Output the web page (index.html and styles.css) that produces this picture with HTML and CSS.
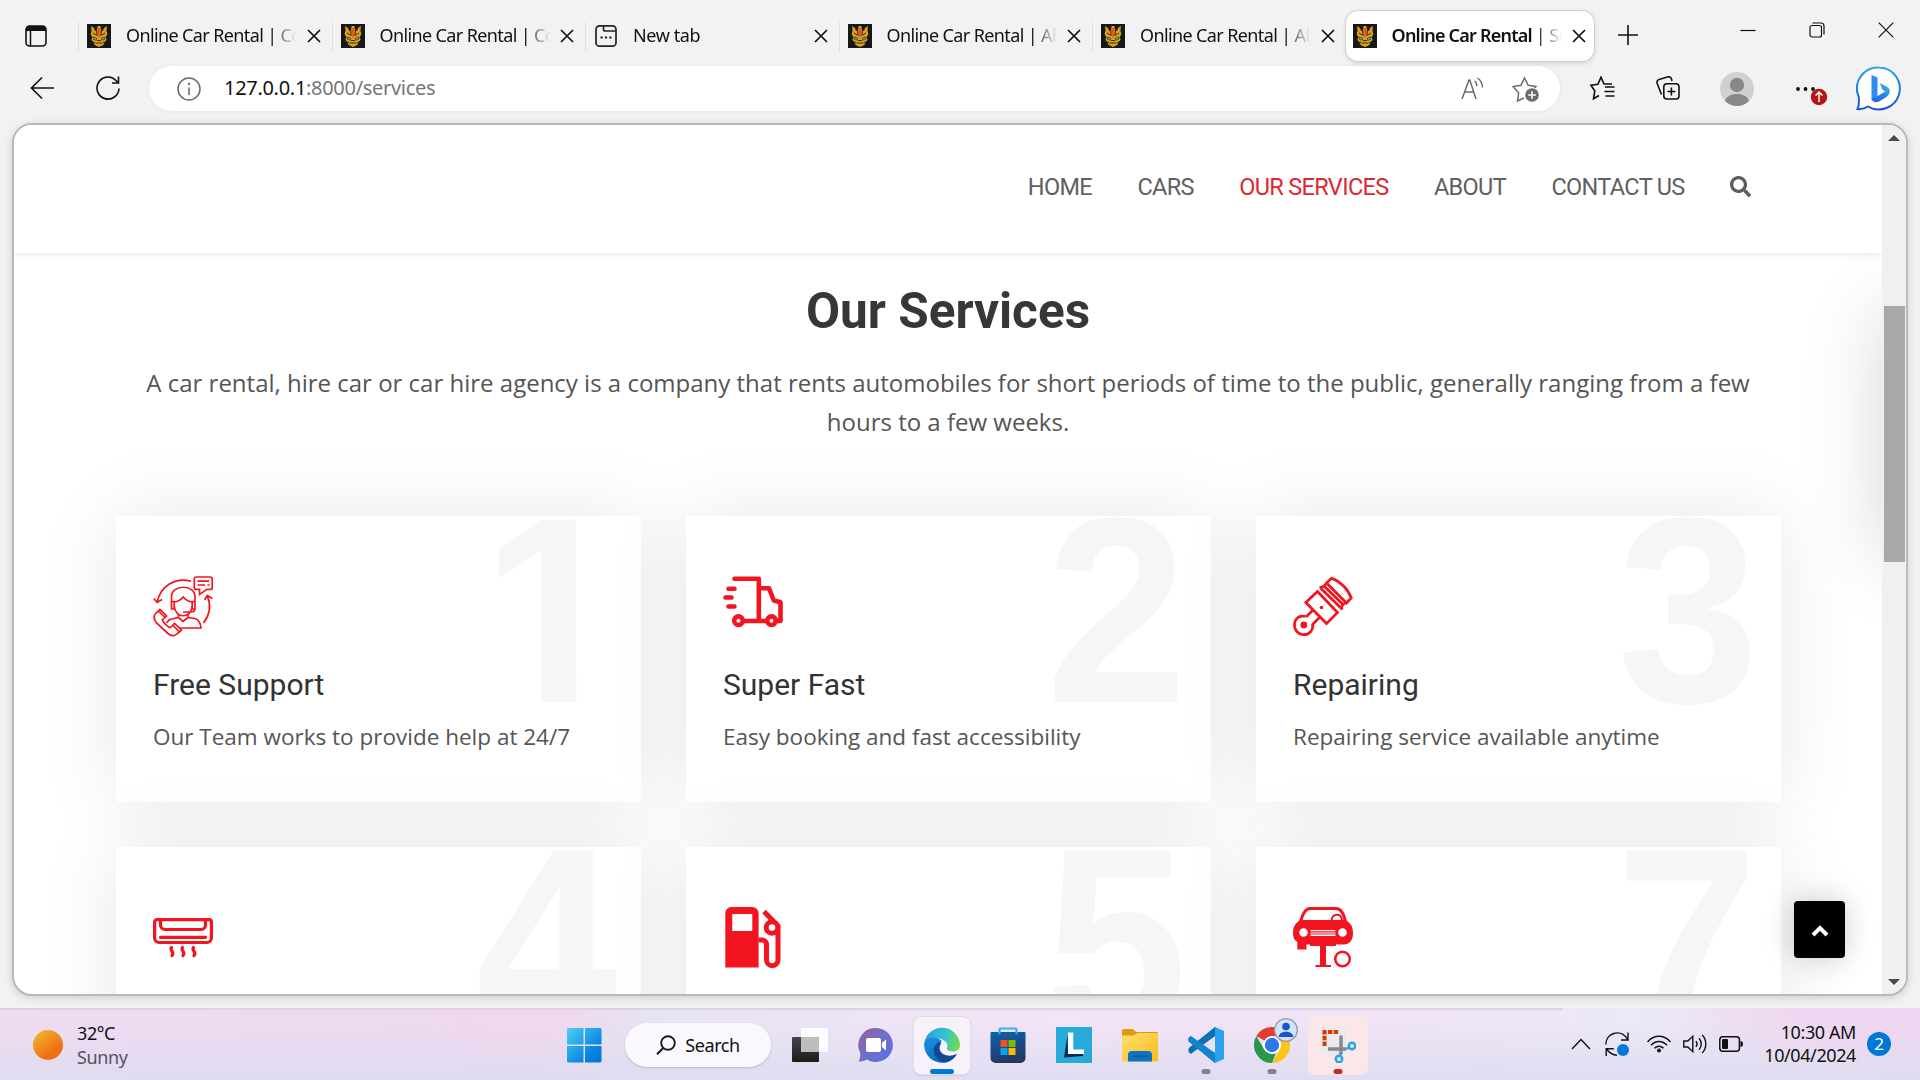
FILE: index.html
```html
<!DOCTYPE html>
<html lang="en">
<head>
<meta charset="utf-8">
<title>Online Car Rental | Services</title>
<link rel="stylesheet" href="styles.css">
</head>
<body>
<svg class="defs" width="0" height="0">
  <defs>
    <symbol id="favicon" viewBox="0 0 24 24">
      <rect width="24" height="24" fill="#17181a"/>
      <path d="M4 2l3 2 1 3 2-1 .6-4h2.8l.6 4 2 1 1-3 3-2-.6 5 1 3-1.600 3 .8 3-2 2-1.200 3-4.400 2-4.400-2-1.200-3-2-2 .8-3L3.600 10l1-3z" fill="#dfa012"/>
      <path d="M10.800 4h2.400l.5 7L12 14l-1.700-3z" fill="#e4572a"/>
      <path d="M9.500 5l.5 7M14.500 5l-.5 7M6 9l3 2M18 9l-3 2M9 19h6M10 16.500h4M6.500 18l2 1M17.500 18l-2 1" stroke="#3a2a0b" stroke-width="1" fill="none"/>
      <path d="M5.800 13l4 1.200-.6 2-2.700-.8zM18.200 13l-4 1.200.6 2 2.700-.8z" fill="#46b4ea" stroke="#20242b" stroke-width=".6"/>
    </symbol>
    <symbol id="tab-x" viewBox="0 0 14 14"><path d="M1 1l12 12M13 1L1 13" stroke="#111" stroke-width="1.700" fill="none"/></symbol>
    <linearGradient id="gwin" x1="0" y1="0" x2="1" y2="1"><stop offset="0" stop-color="#4cd0fb"/><stop offset=".7" stop-color="#0a84dd"/><stop offset="1" stop-color="#0374d2"/></linearGradient>
    <linearGradient id="gsun" x1="0" y1="0" x2=".7" y2="1"><stop offset="0" stop-color="#edc22e"/><stop offset=".8" stop-color="#f06f12"/></linearGradient>
    <linearGradient id="gchat" x1="0" y1="0" x2="1" y2="1"><stop offset="0" stop-color="#9a5e9c"/><stop offset=".5" stop-color="#6d70c8"/><stop offset="1" stop-color="#5a6ee6"/></linearGradient>
    <linearGradient id="gedge1" x1="0" y1=".3" x2="1" y2=".5"><stop offset="0" stop-color="#2b9fe6"/><stop offset=".55" stop-color="#35c1d3"/><stop offset="1" stop-color="#6fdc4e"/></linearGradient>
    <linearGradient id="gedge2" x1="0" y1="0" x2=".4" y2="1"><stop offset="0" stop-color="#1c93de"/><stop offset="1" stop-color="#0d6cc4"/></linearGradient>
    <linearGradient id="gstore" x1="0" y1="0" x2=".3" y2="1"><stop offset="0" stop-color="#0c63b0"/><stop offset="1" stop-color="#233864"/></linearGradient>
    <linearGradient id="gfold" x1="0" y1="0" x2="1" y2="1"><stop offset="0" stop-color="#ffdf70"/><stop offset="1" stop-color="#fcbb1a"/></linearGradient>
    <linearGradient id="gbing" x1="0" y1="0" x2="0" y2="1"><stop offset="0" stop-color="#2aa8ea"/><stop offset="1" stop-color="#1c4fd8"/></linearGradient>
    <linearGradient id="gbing2" x1="0" y1="1" x2="1" y2="0"><stop offset="0" stop-color="#2563e2"/><stop offset=".5" stop-color="#2a7de6"/><stop offset="1" stop-color="#39d0df"/></linearGradient>
    <linearGradient id="gtv" x1="0" y1="0" x2="0" y2="1"><stop offset="0" stop-color="#454545"/><stop offset="1" stop-color="#1c1c1c"/></linearGradient>
  </defs>
</svg>

<div class="tabs">
  <svg class="tab-actions" viewBox="0 0 22 22"><rect x="1" y="1" width="20" height="20" rx="3.500" fill="none" stroke="#111" stroke-width="1.600"/><path d="M1 6V4a3 3 0 0 1 3-3h14a3 3 0 0 1 3 3v2z" fill="#111"/><path d="M5.500 6v15" stroke="#111" stroke-width="1.500"/></svg>
  <div class="tab"><svg class="fav"><use href="#favicon"/></svg><span class="tab-title">Online Car Rental | Contact</span><svg class="tab-x"><use href="#tab-x"/></svg></div>
  <div class="tab"><svg class="fav"><use href="#favicon"/></svg><span class="tab-title">Online Car Rental | Contact</span><svg class="tab-x"><use href="#tab-x"/></svg></div>
  <div class="tab"><svg class="fav" viewBox="0 0 24 24"><rect x="2" y="1.800" width="20" height="20.400" rx="3.500" fill="none" stroke="#222" stroke-width="1.700"/><path d="M9.500 2v3.500a1.500 1.500 0 0 0 1.500 1.500h11" fill="none" stroke="#222" stroke-width="1.700"/><path d="M6.500 13.500h2.200M10.900 13.500h2.200M15.300 13.500h2.200" stroke="#222" stroke-width="2.200"/></svg><span class="tab-title tab-title-short">New tab</span><svg class="tab-x"><use href="#tab-x"/></svg></div>
  <div class="tab"><svg class="fav"><use href="#favicon"/></svg><span class="tab-title">Online Car Rental | About</span><svg class="tab-x"><use href="#tab-x"/></svg></div>
  <div class="tab"><svg class="fav"><use href="#favicon"/></svg><span class="tab-title">Online Car Rental | About</span><svg class="tab-x"><use href="#tab-x"/></svg></div>
  <div class="tab tab-active"><svg class="fav"><use href="#favicon"/></svg><span class="tab-title"><b>Online Car Rental</b> | Services</span><svg class="tab-x"><use href="#tab-x"/></svg></div>
  <svg class="new-tab" viewBox="0 0 20 20"><path d="M10 0v20M0 10h20" stroke="#111" stroke-width="1.600"/></svg>
  <div class="window-controls">
    <svg viewBox="0 0 16 16"><path d="M.5 8.500h15" stroke="#111" stroke-width="1.200"/></svg>
    <svg viewBox="0 0 16 16"><rect x="1" y="3.500" width="11.500" height="11.500" rx="2" fill="none" stroke="#111" stroke-width="1.200"/><path d="M3.500 1h8.500a3 3 0 0 1 3 3v8.500" fill="none" stroke="#111" stroke-width="1.200"/></svg>
    <svg viewBox="0 0 16 16"><path d="M.7.700l14.600 14.600M15.300.700L.7 15.300" stroke="#111" stroke-width="1.200"/></svg>
  </div>
</div>

<div class="toolbar">
  <svg class="back" viewBox="0 0 24 24"><path d="M24 12H1.500M12 1.500L1.500 12 12 22.500" fill="none" stroke="#111" stroke-width="1.700"/></svg>
  <svg class="reload" viewBox="0 0 24 24"><path d="M23 12.500a11 11 0 1 1-3.300-8.300l2.600 2.600M22.500.500v6.500h-6.500" fill="none" stroke="#111" stroke-width="1.600"/></svg>
  <div class="address">
    <svg class="info" viewBox="0 0 24 24"><circle cx="12" cy="12" r="11" fill="none" stroke="#6b6b6b" stroke-width="1.500"/><path d="M12 10.500v7.500" stroke="#6b6b6b" stroke-width="1.600"/><circle cx="12" cy="7" r="1.200" fill="#6b6b6b"/></svg>
    <span class="url">127.0.0.1<span class="url-rest">:8000/services</span></span>
    <svg class="read" viewBox="0 0 24 24"><path d="M1 22L8 3h.8L15 22M3.600 15h9.200M13.500 4c1.600 1.300 2.400 3 2.500 5M16.500 1c3 2 4.700 5 5 9.500" fill="none" stroke="#6b6b6b" stroke-width="1.500"/></svg>
    <svg class="addfav" viewBox="0 0 27 26"><path d="M12 22l-6.500 3 1.200-8L1 10.500l8-1.200L12.500 2l3.700 7.300 7.800 1.200-1.500 1.500" fill="none" stroke="#6b6b6b" stroke-width="1.500"/><circle cx="20" cy="19" r="6.800" fill="#6b6b6b"/><path d="M20 15.200v7.600M16.200 19h7.600" stroke="#fff" stroke-width="1.600"/></svg>
  </div>
  <svg class="favs" viewBox="0 0 25 24"><path d="M9 19.500l-5.500 3.300L4.800 15 .9 9.200l7-1L11 1.200l3 6.800h8M15 11h9.500M14.500 15.500h10M15.500 20h9" fill="none" stroke="#111" stroke-width="1.600"/></svg>
  <svg class="coll" viewBox="0 0 24 24"><rect x="7.800" y="7.800" width="15.200" height="15.200" rx="3" fill="none" stroke="#111" stroke-width="1.600"/><path d="M15.400 11.500v8M11.400 15.500h8M5.500 18.500L1.200 7.500C.6 5.500 1.500 4 3 3.500l8.500-2.600c2-.5 3.500.3 4 2.100l.5 2" fill="none" stroke="#111" stroke-width="1.600"/></svg>
  <svg class="avatar" viewBox="0 0 34 34"><circle cx="17" cy="17" r="17" fill="#d2d0ce"/><circle cx="17" cy="13" r="7.200" fill="#8a8886"/><path d="M5 29c2-5.500 7-7 12-7s10 1.500 12 7a17 17 0 0 1-24 0z" fill="#8a8886"/></svg>
  <svg class="more" viewBox="0 0 34 34"><circle cx="3" cy="17" r="1.900" fill="#111"/><circle cx="10.500" cy="17" r="1.900" fill="#111"/><circle cx="18" cy="17" r="1.900" fill="#111"/><circle cx="24" cy="25" r="8.200" fill="#b71414"/><path d="M24 30v-9.500M20.500 23.500l3.500-3.500 3.500 3.500" fill="none" stroke="#fff" stroke-width="1.500"/></svg>
  <svg class="bing" viewBox="0 0 46 48"><path d="M23.500 1.500a21 21 0 1 1-11.500 39c-3 2-6.500 3-10.500 2.500 2-3.500 1.500-7 1.300-12A21 21 0 0 1 23.500 1.500z" fill="#fff" stroke="url(#gbing)" stroke-width="2"/><path d="M15.500 9l6 2.500V30l-5.500 5c-.5-1-.5-2-.5-4z" fill="#2f8df0"/><path d="M15.500 32c1.500 5 5 5 8 3.200l7-4.200c4-2.600 4.600-8 .5-10.200l-7.200-3.800 2.600 6.800 3 1.600L18 32z" fill="url(#gbing2)"/></svg>
</div>

<div class="frame">
  <div class="page">
    <header class="site-header">
      <nav class="nav">
        <a>HOME</a><a>CARS</a><a class="current">OUR SERVICES</a><a>ABOUT</a><a>CONTACT US</a>
        <svg class="nav-search" viewBox="0 0 512 512"><path fill="#5c5c5c" d="M505 442.700L405.300 343c-4.500-4.500-10.600-7-17-7H372c27.600-35.300 44-79.700 44-128C416 93.100 322.900 0 208 0S0 93.100 0 208s93.100 208 208 208c48.300 0 92.700-16.400 128-44v16.300c0 6.400 2.500 12.500 7 17l99.700 99.700c9.400 9.400 24.600 9.400 33.900 0l28.300-28.300c9.400-9.400 9.400-24.600.1-34zM208 336c-70.700 0-128-57.200-128-128 0-70.700 57.200-128 128-128 70.700 0 128 57.200 128 128 0 70.700-57.200 128-128 128z"/></svg>
      </nav>
    </header>
    <div class="side-panel"></div>
    <main class="services">
      <h1>Our Services</h1>
      <p class="lead">A car rental, hire car or car hire agency is a company that rents automobiles for short periods of time to the public, generally ranging from a few hours to a few weeks.</p>
      <div class="cards">
        <article class="card">
          <span class="num num-one">1</span>
          <svg class="icon" viewBox="0 0 60 60" fill="none" stroke="#f2141f" stroke-width="1.700">
            <path d="M38 5.200C22 1 7.500 10 4.200 26M.8 22.500l3.300 4 5-3M50.500 47c6-8 8-17 4-26.500M51.500 24l2.800-4.500 5 3"/>
            <path d="M43 1h14.500a1.700 1.700 0 0 1 1.700 1.700v9a1.700 1.700 0 0 1-1.700 1.700H54L46.500 18.500V13.400H43a1.700 1.700 0 0 1-1.700-1.700v-9A1.700 1.700 0 0 1 43 1zM44.500 5.200H56M44.500 9H52M54.500 9H56.500"/>
            <path d="M18.500 26V21c0-13 23.500-13 23.500 0v5M18.500 25.500v7.500h2.700v-7.500zM39.200 25.500v7.500H42v-7.500zM21.200 26c4-.5 7-2.500 9-5 2.500 3 5.500 4.500 9 5M21.200 30c1 13 17 13 18 0M42 32c0 3-1.500 4-4 4h-8"/>
            <path d="M25.500 38v3.500l-7 1.500c-2.500.5-4 2-4.500 4M35 38v3.500l7 1c4 1 5.500 5 6 9.500H27M25.500 41.500L30 45.500l5-4"/>
            <path d="M7 33.500L3 37c-3 3-2.500 6 .5 10l12 11c3 2.500 7 1.800 9-.5l4-3.500-7-6.500-4 4C15 51.500 9 45 9.500 43.500l4-3.500zM5.500 35l6.500 6.500M20 49.500l6.500 6.500"/>
          </svg>
          <h3>Free Support</h3>
          <p>Our Team works to provide help at 24/7</p>
        </article>
        <article class="card">
          <span class="num">2</span>
          <svg class="icon" viewBox="0 0 60 60" fill="none" stroke="#f2141f" stroke-width="4.600" stroke-linecap="round" stroke-linejoin="round">
            <path d="M11.500 2.800h24.300V45M36 12.200h10l4.800 12.300 6.700 1.800v18.600h-4M21 45h22M5.500 12.800h6M2.500 21.500h6M5.500 30.500h6"/>
            <circle cx="15.500" cy="44.700" r="4.300"/><circle cx="48.500" cy="44.700" r="4.300"/>
          </svg>
          <h3>Super Fast</h3>
          <p>Easy booking and fast accessibility</p>
        </article>
        <article class="card">
          <span class="num num-three">3</span>
          <svg class="icon" viewBox="0 0 60 60" fill="none" stroke="#f2141f" stroke-width="2.700">
            <path d="M38.500 2.200C47 5 55 13 58.300 22l-4.800 5L33.500 7z"/>
            <path d="M27.500 12l22 21.500M26.500 11.500l4-1 3.500-3.500M48 33l1.500-4 4-3M31.500 10.500l19 18.500"/>
            <path d="M24.500 15.500L44.500 36.500 33.500 47.500 12.800 26.500z"/>
            <path d="M20 34l-7 7M27 41l-7.500 7.500"/>
            <path d="M12.500 40.500C5 38.500 1.500 44 1.500 49c0 5.500 4 9.700 9.200 9.700 6 0 9.800-4.700 9-11"/>
            <circle cx="10.800" cy="49" r="3.400" fill="#f2141f" stroke="none"/><circle cx="28.500" cy="31.500" r="1.800" fill="#f2141f" stroke="none"/>
          </svg>
          <h3>Repairing</h3>
          <p>Repairing service available anytime</p>
        </article>
        <article class="card">
          <span class="num">4</span>
          <svg class="icon" viewBox="0 0 60 60" fill="none" stroke="#f2141f" stroke-width="3.200" stroke-linecap="round">
            <path d="M4 12.600h52a2.400 2.400 0 0 1 2.400 2.400v16a4.500 4.500 0 0 1-4.500 4.500H6.100a4.500 4.500 0 0 1-4.500-4.500V15A2.400 2.400 0 0 1 4 12.600z"/>
            <path d="M7.500 14v4a4.500 4.500 0 0 0 4.500 4.500h36a4.500 4.500 0 0 0 4.500-4.500v-4M7.500 30.300h45"/>
            <path d="M18.500 40.500c-2.500 3.500 4 4.500 .5 8M29.500 40.500c-2.500 3.500 4 4.500 .5 8M40.500 40.500c-2.500 3.500 4 4.500 .5 8"/>
          </svg>
        </article>
        <article class="card">
          <span class="num">5</span>
          <svg class="icon" viewBox="0 0 60 60">
            <path fill="#f2141f" fill-rule="evenodd" d="M2.300 60.500V6A6 6 0 0 1 8.300 0h21A6.300 6.300 0 0 1 35.600 6v54.500zM9.300 7v17h20V7z"/>
            <path d="M35.500 33h4a4.300 4.300 0 0 1 4 4.300V53a5.700 5.700 0 0 0 11.500 0V19L41 4.500" fill="none" stroke="#f2141f" stroke-width="5"/>
            <circle cx="49" cy="20.500" r="5.800" fill="#fff" stroke="#f2141f" stroke-width="5"/>
          </svg>
        </article>
        <article class="card">
          <span class="num">7</span>
          <svg class="icon" viewBox="0 0 60 60">
            <path d="M7.500 15C9.500 7 12 1.500 17 1.500h26C48 1.500 51 7 52.500 15" fill="none" stroke="#f2141f" stroke-width="3"/>
            <path d="M38.500 14c0-8 10-8.500 10.500-1" fill="none" stroke="#f2141f" stroke-width="2"/>
            <path fill="#f2141f" fill-rule="evenodd" d="M8 13h44c5 2 8 6 8 13 0 7-3 11-9 11.500l-8 0v1.500H33V58h5v2H22.500v-2H27V39H17v-1.500h-3.500V42.500H4.300V35C1.500 33.500 0 30.500 0 26c0-7 3-11 8-13zM10.500 21.200a4.300 4.300 0 1 0 0 8.600 4.300 4.300 0 1 0 0-8.600zM49.500 21.200a4.300 4.300 0 1 0 0 8.600 4.300 4.300 0 1 0 0-8.600zM17.500 23v1.300h25V23zM17.500 25.600v.8h25v-.8zM17.500 27.600V29h25v-1.400z"/>
            <circle cx="49.500" cy="52" r="7.300" fill="#fff" stroke="#f2141f" stroke-width="2.500"/>
          </svg>
        </article>
      </div>
    </main>
    <div class="to-top"><svg viewBox="0 0 18 12"><path d="M2 10l7-7 7 7" fill="none" stroke="#fff" stroke-width="4"/></svg></div>
  </div>
  <div class="scrollbar">
    <i class="arrow up"></i><i class="thumb"></i><i class="arrow down"></i>
  </div>
</div>

<div class="taskbar">
  <div class="weather">
    <svg viewBox="0 0 30 30"><circle cx="15" cy="15" r="15" fill="url(#gsun)"/></svg>
    <div><div class="temp">32°C</div><div class="cond">Sunny</div></div>
  </div>
  <div class="apps">
    <svg class="start" viewBox="0 0 36 36"><path d="M0 1.500A1.500 1.500 0 0 1 1.500 0H17v17H0zM18.500 0H34a1.500 1.500 0 0 1 1.500 1.500V17h-17zM0 18.500h17v17H1.500A1.500 1.500 0 0 1 0 34zM18.500 18.500h17V34a1.500 1.500 0 0 1-1.500 1.500H18.500z" fill="url(#gwin)"/></svg>
    <div class="search"><svg viewBox="0 0 20 20"><circle cx="12" cy="8" r="6.800" fill="none" stroke="#1b1b1b" stroke-width="1.900"/><path d="M7.200 13L1 19.300" stroke="#1b1b1b" stroke-width="2.100"/></svg>Search</div>
    <div class="app"><svg viewBox="0 0 36 36"><rect y="10" width="27" height="25" rx="1" fill="url(#gtv)"/><rect x="9" y="1" width="27" height="24" rx="1" fill="#fff" fill-opacity=".85"/><rect x="9" y="10" width="18" height="15" fill="#bdbdbd"/></svg></div>
    <div class="app"><svg viewBox="0 0 36 36"><path d="M18 1a17 17 0 1 1-9 31.500c-3 1.500-5.500 2-8.500 2 1.500-2.500 2-5 1.800-8.500A17 17 0 0 1 18 1z" fill="url(#gchat)"/><rect x="8" y="11" width="15" height="14" rx="2" fill="#fff"/><path d="M24 16l4-3.500v11L24 20z" fill="#fff"/></svg></div>
    <div class="app app-active"><svg viewBox="0 0 36 36"><path d="M.3 15.500A18 18 0 0 1 36 18c0 4-3 6.500-7 6.500-4.500 0-7-1.500-6-4C24 16 20 12 13 11 7 10.200 2 12 .3 15.500z" fill="url(#gedge1)"/><path d="M.2 16C2 9.500 11 9 16 12.500c2 1.300 3 3 3 3-4 0-6 4-5 9 1 5 5 9.500 10 10.300A18 18 0 0 1 .2 16z" fill="url(#gedge2)"/><path d="M18 14.500c-9 1-10 10-6 15.500 3.500 5 9 6.500 12.500 4.800 4-1.500 7-4.500 8.500-8-7 3.500-15 2-17-3.500-1-3 0-5.500 2-6.800z" fill="#114a93"/><path d="M17 14.500c3.500-1.500 6.500 1 6.300 3.800-.1 1.700-1.300 2-1 3.700-4 1-6.500-2-5.300-7.500z" fill="#f5f1f9"/></svg><i class="dot dot-wide"></i></div>
    <div class="app"><svg viewBox="0 0 36 36"><path d="M9.500 6V2.500A1 1 0 0 1 10.500 1.500h15a1 1 0 0 1 1 1V7" fill="none" stroke="#2cb5ee" stroke-width="2.200"/><path d="M.5 6a1 1 0 0 1 1-1h33a1 1 0 0 1 1 1v25a5 5 0 0 1-5 5h-25a5 5 0 0 1-5-5z" fill="url(#gstore)"/><path d="M9.500 5v2.200M26.500 5v2.200" fill="none" stroke="#2cb5ee" stroke-width="2"/><path fill="#f25022" d="M10.500 13h7v7h-7z"/><path fill="#7fba00" d="M18.500 13h7v7h-7z"/><path fill="#00a4ef" d="M10.500 21h7v7h-7z"/><path fill="#ffb900" d="M18.500 21h7v7h-7z"/></svg></div>
    <div class="app"><svg viewBox="0 0 36 36"><path fill="#27aad8" d="M0 0h36v36H0z"/><path fill="#0a2a5c" d="M11.500 8L8 30.500l19-1.500v-2H12z"/><path fill="#fff" d="M12 5.500h5.300V22.500H28V27H12z"/></svg></div>
    <div class="app"><svg viewBox="0 0 36 36"><path d="M0 3.500A1.500 1.500 0 0 1 1.500 2H11l3 3h21a1 1 0 0 1 1 1v4H0z" fill="#dc9c0a"/><path d="M0 8.500h12L15.500 6H36v28.500H1.500A1.500 1.500 0 0 1 0 33z" fill="url(#gfold)"/><path d="M6 34.500V28a4 4 0 0 1 4-4h16a4 4 0 0 1 4 4v6.500z" fill="#0b74c9"/><path d="M11 29.300h14" stroke="#0a4f94" stroke-width="1.600" stroke-linecap="round"/></svg></div>
    <div class="app"><svg viewBox="0 0 36 36"><path d="M27 0L8.500 18 4 14.500 3 9 .5 11v3.500L27 36V26L12 18 27 9z" fill="#0f7fc9"/><path d="M.5 22v3l2.300 2L27 9V0L.8 21z" fill="#0d70b7"/><path d="M.3 11L3 9l24 17v10L.5 14z" fill="#1483cd"/><path d="M27 0l9 4v28l-9 4z" fill="#29a1ee"/></svg><i class="dot"></i></div>
    <div class="app"><svg viewBox="0 0 36 36"><path d="M18 18L2.400 9A18 18 0 0 1 33.600 9L36 18z" fill="#e33b2e"/><path d="M18 18V9h15.600A18 18 0 0 1 18 36l7.800-13.500z" fill="#fcc31d"/><path d="M18 36A18 18 0 0 1 2.400 9l7.800 13.500L20 27l2-1z" fill="#28974a"/><circle cx="18" cy="18" r="9" fill="#fff"/><circle cx="18" cy="18" r="7.200" fill="#2c78e8"/></svg>
      <svg class="profile" viewBox="0 0 24 24"><circle cx="12" cy="12" r="11.300" fill="#d3e1fb" stroke="#9aa0a8" stroke-width="1.400"/><circle cx="12" cy="8.500" r="3.800" fill="#1458c8"/><path d="M4.800 19c0-7 14.400-7 14.400 0z" fill="#1458c8"/></svg><i class="dot"></i></div>
    <div class="app app-snip"><svg viewBox="0 0 36 36"><rect x="0" y="1" width="26" height="26" rx="3" fill="#e9eaec"/><path d="M4.500 19V5H19" fill="none" stroke="#d83b01" stroke-width="4" stroke-dasharray="4.500 1.300"/><path d="M21 8.500V27M8 22h18" stroke="#85888d" stroke-width="3.400"/><circle cx="32" cy="19" r="3.200" fill="none" stroke="#23a7ea" stroke-width="2.500"/><circle cx="19" cy="32" r="3.200" fill="none" stroke="#23a7ea" stroke-width="2.500"/><path d="M26 22l3-1.500M21 26l-1 3" stroke="#23a7ea" stroke-width="2.500"/></svg><i class="dot dot-red"></i></div>
  </div>
  <div class="tray">
    <svg class="chev" viewBox="0 0 20 12"><path d="M1 11L10 1.500 19 11" fill="none" stroke="#111" stroke-width="1.400"/></svg>
    <svg class="sync" viewBox="0 0 24 24"><path d="M.8 12.500C.8 1.500 15-4 22.500 7M23 .500V8h-7M12 23.300C7 23 4 20.500 1.500 17M1.200 24v-7.300h7.600" fill="none" stroke="#111" stroke-width="1.400"/><circle cx="18" cy="18" r="6" fill="#0078d7"/></svg>
    <svg class="wifi" viewBox="0 0 24 18"><path d="M.5 7C7-.700 17-.700 23.500 7M4 10.300c4.500-5 11.500-5 16 0M7.500 13.300c2.700-2.800 6.300-2.800 9 0" fill="none" stroke="#111" stroke-width="1.500"/><circle cx="12" cy="15.500" r="2" fill="#111"/></svg>
    <svg class="vol" viewBox="0 0 24 20"><path d="M.8 7h4l5-4.700v15.400L4.800 13h-4zM13 7.200c1.300 1.700 1.300 3.900 0 5.600M16 4.300c3 3.300 3 8.100 0 11.400M19.200 1c4.800 5 4.800 13 0 18" fill="none" stroke="#111" stroke-width="1.400"/></svg>
    <svg class="batt" viewBox="0 0 24 16"><rect x=".8" y=".8" width="19.600" height="14.400" rx="3" fill="none" stroke="#111" stroke-width="1.500"/><rect x="3" y="3" width="6" height="10" rx="1" fill="#111"/><path d="M21.500 5c1.500 0 2.500 1 2.500 3s-1 3-2.500 3z" fill="#111"/></svg>
    <div class="clock"><div>10:30 AM</div><div>10/04/2024</div></div>
    <div class="badge">2</div>
  </div>
</div>
</body>
</html>
```
FILE: styles.css
```css
* { box-sizing: border-box; }
body {
  margin: 0;
  width: 1920px;
  height: 1080px;
  overflow: hidden;
  display: flex;
  flex-direction: column;
  background: #f2f2f2;
  font-family: "Noto Sans", sans-serif;
  color: #111;
}
svg { display: block; flex: none; }
.defs { position: absolute; }

/* tab strip */
.tabs { height: 66px; display: flex; align-items: flex-start; padding: 11px 0 0 25px; }
.tab-actions { width: 22px; height: 22px; margin: 14px 31px 0 0; }
.tab {
  width: 253.5px; height: 50px; flex: none;
  display: flex; align-items: center;
  padding: 0 10px 0 9px;
  background: linear-gradient(#dfdfdf, #dfdfdf) 0 11px / 1px 30px no-repeat;
}
.fav { width: 24px; height: 24px; margin: 0 15px 0 0; }
.tab-title {
  width: 170px; flex: none;
  font-size: 18px; letter-spacing: -.62px; line-height: 26px; margin-top: -2px;
  white-space: nowrap; overflow: hidden;
  -webkit-mask-image: linear-gradient(90deg, #000 145px, transparent 170px);
  mask-image: linear-gradient(90deg, #000 145px, transparent 170px);
}
.tab-title-short { letter-spacing: -.4px; }
.tab-x { width: 14px; height: 14px; margin-left: auto; margin-right: 1px; }
.tab-active {
  width: 248px;
  padding: 0 7px 0 7px;
  background: #fff;
  border-radius: 12px;
  box-shadow: 0 0 0 1px #cfcfcf, 0 2px 5px rgba(0,0,0,.15);
}
.tab-active b { font-weight: 600; letter-spacing: -.78px; }
.new-tab { width: 20px; height: 20px; margin: 14px 0 0 24px; }
.window-controls { display: flex; gap: 53px; margin: 11px 26px 0 auto; }
.window-controls svg { width: 16px; height: 16px; }

/* address bar */
.toolbar { height: 57px; display: flex; align-items: flex-start; padding-left: 30px; }
.back, .reload { width: 24px; height: 24px; margin-top: 10px; }
.reload { margin-left: 42px; }
.address {
  width: 1411px; height: 45px; margin-left: 29px;
  display: flex; align-items: center;
  padding: 0 21px 0 28px;
  background: #fff; border-radius: 23px;
  box-shadow: 0 0 4px rgba(0,0,0,.06);
}
.info { width: 24px; height: 24px; }
.url { margin: -2px 0 0 23px; font-size: 20px; letter-spacing: -.3px; }
.url-rest { color: #767676; }
.read { width: 24px; height: 24px; margin-left: auto; margin-right: 27px; }
.addfav { width: 27px; height: 26px; }
.favs { width: 25px; height: 24px; margin: 10px 0 0 30px; }
.coll { width: 24px; height: 24px; margin: 10px 0 0 41px; }
.avatar { width: 34px; height: 34px; margin: 6px 0 0 40px; }
.more { width: 34px; height: 34px; margin: 6px 0 0 41px; }
.bing { width: 46px; height: 48px; margin-left: 27px; }

/* browser viewport */
.frame {
  width: 1896px; height: 873px; margin-left: 12px; flex: none;
  display: flex;
  background: #fff;
  border: 2px solid #b9b9b9;
  border-radius: 20px;
  overflow: hidden;
  box-shadow: 0 2px 8px rgba(0,0,0,.15);
}
.page { position: relative; width: 1868px; height: 869px; overflow: hidden; flex: none; }
.site-header {
  position: relative; z-index: 2;
  height: 128px; padding-right: 131px;
  background: #fff;
  box-shadow: 0 1px 8px rgba(0,0,0,.1);
  display: flex; justify-content: flex-end;
}
.nav { display: flex; gap: 45.400px; height: 123px; align-items: center; font: 23.500px Roboto, sans-serif; letter-spacing: -.66px; color: #606060; }
.nav .current { color: #dc2833; }
.nav-search { width: 21px; height: 21px; }
.side-panel {
  position: absolute; left: 100%; top: 185px;
  width: 400px; height: 248px;
  box-shadow: 0 0 75px rgba(0,0,0,.16);
}
.services { padding: 29px 101.500px 0 101.500px; }
.services h1 { margin: 0; font: bold 49.500px/58px Roboto, sans-serif; color: #373737; text-align: center; }
.lead {
  margin: 23px 0 0; padding: 0 22px;
  font: 24px/39px "Open Sans", sans-serif; color: #555; text-align: center;
}
.cards { display: grid; grid-template-columns: repeat(3, 1fr); gap: 45px; margin-top: 75px; }
.card {
  position: relative;
  height: 286px; padding: 60px 37.500px 0;
  background: #fff;
  box-shadow: 0 0 75px rgba(0,0,0,.095);
}
.icon { position: relative; width: 60px; height: 60px; overflow: visible; }
.num {
  position: absolute; right: 23px; top: -30px;
  font: bold 255px/1 "Liberation Sans", sans-serif; color: #f6f6f6;
  transform: scaleY(1.04); transform-origin: 0 84.600%;
}
/* trims the foot of the digit so only the stem reaches the baseline */
.num-one {
  right: 17px;
  clip-path: polygon(0 0, 66.600% 0, 66.600% 100%, 42% 100%, 42% 74%, 0 74%);
}
.num-three { right: 21.500px; }
.card h3 { position: relative; margin: 30.500px 0 0; font: 30px/36px Roboto, sans-serif; color: #333; }
.card p { position: relative; margin: 16.500px 0 0; font: 22.500px/36px "Open Sans", sans-serif; color: #555; white-space: nowrap; }
.to-top {
  position: absolute; left: 1780px; top: 776px; z-index: 3;
  width: 51px; height: 57px;
  display: flex; align-items: center; justify-content: center;
  background: #000; border-radius: 4px;
  box-shadow: 0 0 30px rgba(0,0,0,.2);
}
.to-top svg { width: 18px; height: 12px; margin-top: 2px; }
.scrollbar { flex: 1; display: flex; flex-direction: column; align-items: center; background: #f0f0f0; }
.arrow { border: 6px solid transparent; }
.up { border-top: 0; border-bottom-color: #4a4a4a; margin-top: 10px; }
.thumb { width: 21px; height: 256px; margin-top: 165px; background: #a8a8a8; }
.down { border-bottom: 0; border-top-color: #4a4a4a; margin: auto 0 9px; }

/* taskbar */
.taskbar {
  height: 72px; margin-top: 12px; flex: none;
  display: grid; grid-template-columns: 567px 1fr auto;
  background:
    linear-gradient(#ddd0e4, #ddd0e4) 0 0 / 1563px 2px no-repeat,
    radial-gradient(ellipse 120px 50px at 520px 8px, #f2d8ee, transparent),
    radial-gradient(ellipse 180px 60px at 1850px 0, #efd4ef, transparent),
    linear-gradient(180deg, transparent 20%, rgba(222,220,240,.9)),
    linear-gradient(90deg, #efdbf1, #ecd9f0 28%, #e6e4f3 34%, #f3e4f6 55%, #efe3f5 72%, #ece8f7 85%, #ecdaf1);
}
.weather { display: flex; align-items: center; padding: 2px 0 0 33px; font-size: 18px; line-height: 24px; letter-spacing: -.4px; }
.weather svg { width: 30px; height: 30px; margin-right: 14px; }
.cond { color: #56525e; letter-spacing: -.4px; }
.apps { display: flex; align-items: center; }
.start { width: 35px; height: 35px; margin-top: 3px; }
.search {
  width: 146px; height: 44px; margin: 2px 10px 0 23px;
  display: flex; align-items: center; justify-content: center; gap: 9px;
  border-radius: 22px; background: #faf8fd;
  box-shadow: 0 1px 2px rgba(80,60,100,.25);
  font-size: 18px; letter-spacing: -.4px;
}
.search svg { width: 20px; height: 20px; }
.app {
  position: relative;
  width: 58px; height: 60px; margin-right: 8px; flex: none;
  display: flex; align-items: center; justify-content: center;
  border-radius: 7px; margin-top: 2px;
}
.app > svg { width: 36px; height: 36px; }
.app-active { background: #f7f2fa; box-shadow: 0 0 0 1px #e4dbea, 0 1px 2px rgba(80,60,100,.3); width: 56px; height: 57px; margin-left: 1px; margin-right: 9px; }
.app-snip { background: #fbe6e8; width: 60px; margin-left: -1px; }
.dot {
  position: absolute; bottom: 1px; left: 50%; transform: translateX(-50%);
  width: 9px; height: 5px; border-radius: 3px; background: #85808b;
}
.dot-wide { width: 24px; background: #0078d7; bottom: 0; }
.dot-red { background: #c42b1c; }
.app > .profile { position: absolute; left: 31px; top: 3px; width: 24px; height: 24px; }
.tray { display: flex; align-items: center; padding-right: 29px; }
.chev { width: 20px; height: 12px; margin-right: 14px; }
.sync { width: 24px; height: 24px; margin-right: 18px; }
.wifi { width: 24px; height: 18px; margin-right: 12px; }
.vol { width: 24px; height: 20px; margin-right: 12px; }
.batt { width: 24px; height: 16px; }
.clock { width: 113px; text-align: right; font-size: 18px; line-height: 23px; letter-spacing: -.4px; }
.badge {
  width: 24px; height: 24px; margin-left: 11px;
  border-radius: 50%; background: #0078d7; color: #fff;
  font-size: 17px; line-height: 24px; text-align: center;
}
```
